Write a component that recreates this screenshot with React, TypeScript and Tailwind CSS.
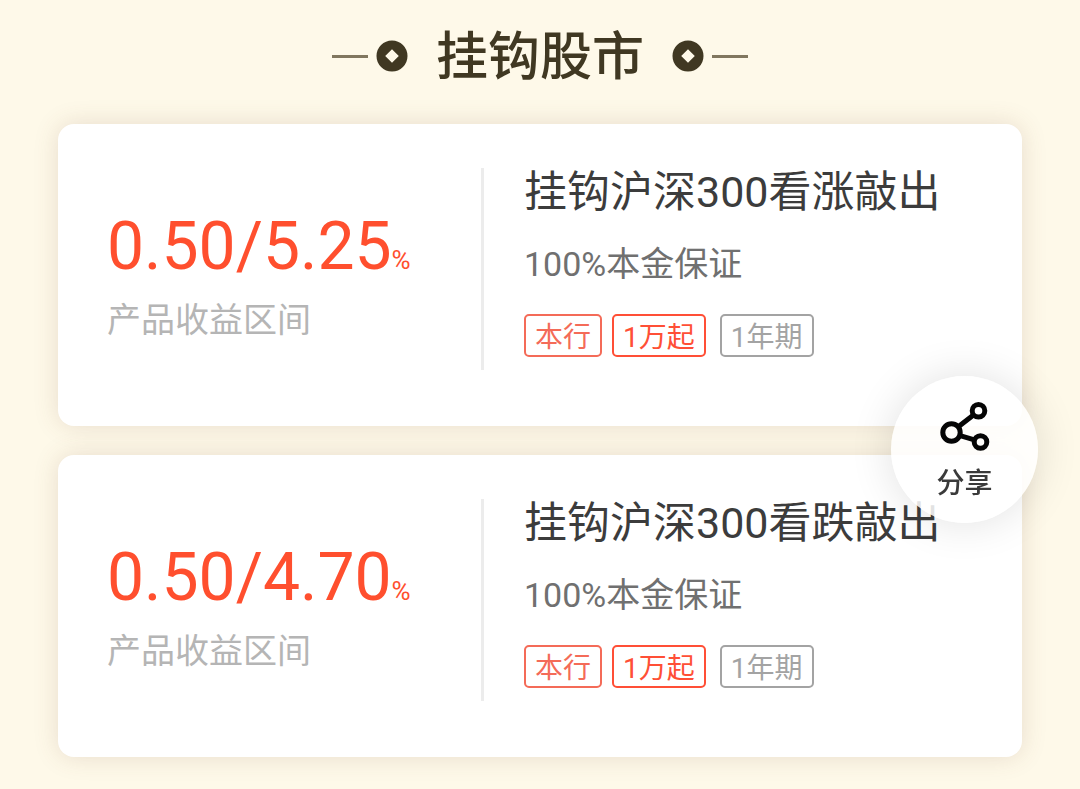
type Product = {
  id: string;
  rate: string;
  name: string;
  guarantee: string;
  minAmount: string;
  term: string;
};

const products: Product[] = [
  {
    id: "up",
    rate: "0.50/5.25",
    name: "挂钩沪深300看涨敲出",
    guarantee: "100%本金保证",
    minAmount: "1万起",
    term: "1年期",
  },
  {
    id: "down",
    rate: "0.50/4.70",
    name: "挂钩沪深300看跌敲出",
    guarantee: "100%本金保证",
    minAmount: "1万起",
    term: "1年期",
  },
];

const tagBase =
  "flex h-[43px] items-center rounded-[5px] border-2 px-[9px] pt-1 text-[28px] leading-none";

function Coin() {
  return (
    <svg viewBox="0 0 32 32" className="size-8" aria-hidden="true">
      <path
        fill="#403822"
        fillRule="evenodd"
        d="M16 .5a15.5 15.5 0 1 1 0 31 15.5 15.5 0 0 1 0-31Zm0 8.7L9.2 16l6.8 6.8 6.8-6.8Z"
      />
    </svg>
  );
}

function SectionTitle({ children }: { children: string }) {
  return (
    <header className="flex items-center justify-center">
      <span className="mr-2 h-[3px] w-9 bg-[#81775f]" />
      <Coin />
      <h1 className="mx-7 pt-1 text-[52px] leading-15 font-medium text-[#403822]">
        {children}
      </h1>
      <Coin />
      <span className="ml-2 h-[3px] w-9 bg-[#81775f]" />
    </header>
  );
}

function ProductCard({ product }: { product: Product }) {
  return (
    <li className="flex rounded-2xl bg-white pt-11 pr-6 pb-14 pl-[49px] shadow-[0_0_24px_rgba(120,80,60,0.17)]">
      <div className="flex w-[377px] shrink-0 flex-col border-r-3 border-[#ececec] pt-[45px]">
        <p className="leading-[68px] whitespace-nowrap text-[#ff4f2e]">
          <span className="text-[66px]">{product.rate}</span>
          <span className="text-[26px]">%</span>
        </p>
        <p className="mt-[2px] text-[34px] leading-10 text-[#b5b5b5]">
          产品收益区间
        </p>
      </div>
      <div className="min-w-0 flex-1 pl-10">
        <h2 className="text-[43px] leading-12 whitespace-nowrap text-[#3c3c3c]">
          {product.name}
        </h2>
        <p className="mt-7 text-[34px] leading-10 text-[#707070]">
          {product.guarantee}
        </p>
        <div className="mt-[30px] mb-[13px] flex">
          <span className={`${tagBase} border-[#f46b58] text-[#f46b58]`}>
            本行
          </span>
          <span className={`${tagBase} ml-[10px] border-[#ff4f36] text-[#ff4f36]`}>
            {product.minAmount}
          </span>
          <span className={`${tagBase} ml-[14px] border-[#a3a3a3] text-[#a3a3a3]`}>
            {product.term}
          </span>
        </div>
      </div>
    </li>
  );
}

function ShareButton() {
  return (
    <button
      type="button"
      className="fixed top-[376px] right-[42px] flex size-[147px] flex-col items-center rounded-full bg-white/85 pt-6 shadow-[0_0_44px_rgba(0,0,0,0.12)]"
    >
      <svg
        viewBox="0 0 52 52"
        className="size-[52px]"
        fill="none"
        stroke="#050505"
        strokeWidth="5"
        aria-hidden="true"
      >
        <circle cx="12.5" cy="32.5" r="8.7" />
        <circle cx="39.5" cy="10.7" r="6.3" />
        <circle cx="41.5" cy="42" r="6.3" />
        <path d="M19.3 26.8 34.8 14.8M21.1 35.6l14.3 4.2" />
      </svg>
      <span className="mt-[14px] text-[28px] leading-9 font-medium text-[#3a3a3a]">
        分享
      </span>
    </button>
  );
}

export default function App() {
  return (
    <main
      lang="zh-CN"
      className="min-h-screen bg-[#fef9e9] px-[58px] pt-6 pb-8 font-[Roboto,'Noto_Sans_CJK_SC',sans-serif]"
    >
      <SectionTitle>挂钩股市</SectionTitle>
      <ul className="mt-9 flex flex-col gap-[29px]">
        {products.map((product) => (
          <ProductCard key={product.id} product={product} />
        ))}
      </ul>
      <ShareButton />
    </main>
  );
}
